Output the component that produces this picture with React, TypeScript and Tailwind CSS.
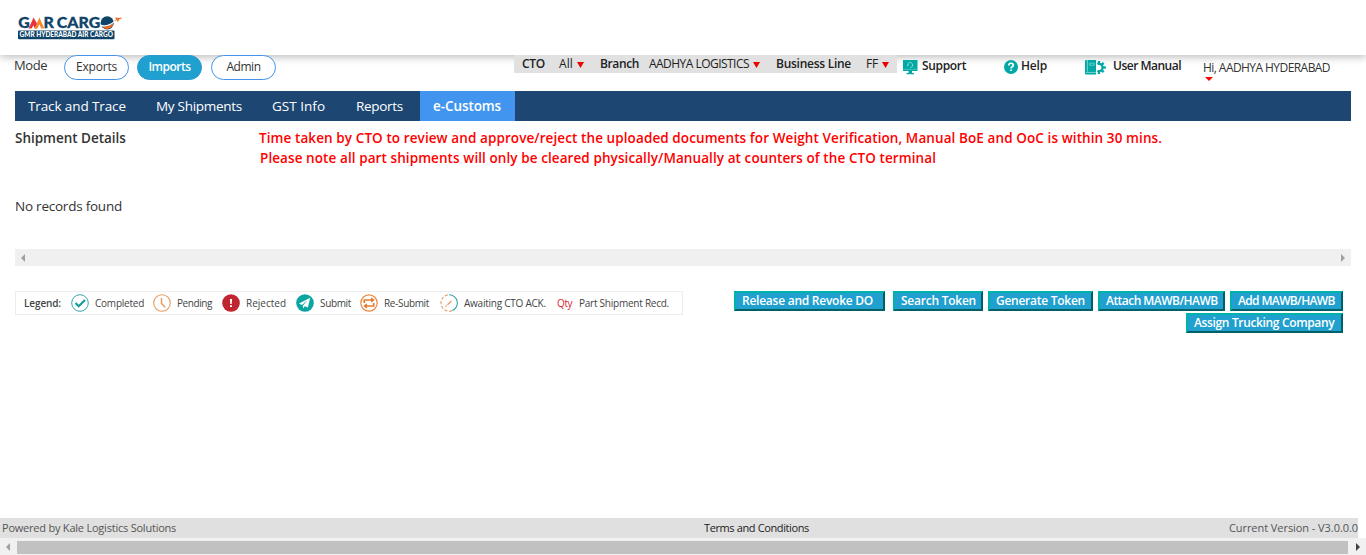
import type { ReactNode } from "react";

function Logo() {
  return (
    <svg width="106" height="26" viewBox="0 0 106 26" className="overflow-visible font-['Lato',sans-serif]">
      <g fill="#0f4468" stroke="#0f4468" strokeWidth="0.3" fontSize="15.6" fontWeight="900">
        <text x="0.3" y="13.2" textLength="11.5" lengthAdjust="spacingAndGlyphs">G</text>
        <text x="25.6" y="13.2" textLength="10.4" lengthAdjust="spacingAndGlyphs">R</text>
        <text x="38.8" y="13.2" textLength="43.5" lengthAdjust="spacingAndGlyphs">CARG</text>
      </g>
      <path d="M10.6 13.4 15.6 2.6l4.6 8.2-1.5 2.6h-2l-1.2-3.2-1.9 3.2z" fill="#e8333c" />
      <path d="M16.6 13.4 21.4 2.6l4.9 10.8h-3.1l-1.8-4.2-2.1 4.2z" fill="#f58a2c" />
      <circle cx="89.2" cy="7.8" r="6.6" fill="#0f4468" />
      <path d="M82.6 9.6c4.5 1.4 8.7.2 13-3.2l.4 1.2c-3.4 3.6-8 5-12.6 3.6z" fill="#fff" />
      <path d="M84 11.6c4.6.5 8-.7 11.4-3.4-.6 5.3-7.6 8-11.4 3.4z" fill="#ed6b27" />
      <path d="m95.6 6.2 3-2.2-2-1 1.4-.4 2.8.5 3-.5-.3.8-2.3 1-1.2 2.3-.9.1.1-1.9z" fill="#ed6b27" />
      <rect x="0" y="15.4" width="96.5" height="8.9" rx="1" fill="#0f4468" />
      <text x="1.6" y="22.3" fontSize="6.6" fontWeight="900" fill="#fff" textLength="93.3" lengthAdjust="spacingAndGlyphs">GMR HYDERABAD AIR CARGO</text>
    </svg>
  );
}

function Caret({ className = "" }: { className?: string }) {
  return <svg width="8" height="6" viewBox="0 0 8 6" className={className}><path d="M0 0h7L3.5 6z" fill="#f00000" /></svg>;
}

function SupportIcon() {
  return (
    <svg width="15" height="15" viewBox="0 0 15 15">
      <path d="M0 0h14.5v11H0zM5.5 11h3.5v2H11v1.2H3.5V13h2z" fill="#00a9a5" />
      <path d="M5 5.4V4.6a2.2 2.2 0 0 1 4.4 0v.8c0 1.6-.9 2.2-2.2 2.2" fill="none" stroke="#8edad7" strokeWidth=".8" />
      <path d="M4.3 4.3h1v1.9h-1zM9.1 4.3h1v1.9h-1z" fill="#8edad7" />
      <path d="M0 9.4h14.5" stroke="#6bcfcb" strokeWidth=".6" />
    </svg>
  );
}

function HelpIcon() {
  return (
    <svg width="14" height="14" viewBox="0 0 14 14">
      <circle cx="7" cy="7" r="7" fill="#00a9a5" />
      <path d="M4.8 5.4c0-2.8 4.5-2.8 4.5-.2 0 1.6-2.2 1.5-2.2 3.2" fill="none" stroke="#fff" strokeWidth="1.7" />
      <path d="M6.2 9.4h1.8v1.7H6.2z" fill="#fff" />
    </svg>
  );
}

function ManualIcon() {
  return (
    <svg width="21" height="15" viewBox="0 0 21 15">
      <path d="M1.2 0H11v14.5H1.2A1.2 1.2 0 0 1 0 13.3V1.2A1.2 1.2 0 0 1 1.2 0z" fill="#00a9a5" />
      <path d="M2.4 0v11.5M1 12.4h10" stroke="#c5efed" strokeWidth=".6" />
      <path d="M4.5 3.2H9.2v2H4.5z" fill="none" stroke="#8edad7" strokeWidth=".7" />
      <path d="M12.4 4.1a3.7 3.7 0 1 1 0 6.8" fill="none" stroke="#00a9a5" strokeWidth="2.2" />
      <path d="M14 1v3M18.6 2.8l-2 2M20.8 7.5h-3M18.6 12.2l-2-2M14 14v-3" stroke="#00a9a5" strokeWidth="2.4" />
    </svg>
  );
}

function CompletedIcon() {
  return (
    <svg width="18" height="18" viewBox="0 0 18 18" fill="none">
      <circle cx="9" cy="9" r="8.3" stroke="#35a7a5" />
      <path d="m4.5 9 3.2 3.2L14 6" stroke="#139d9b" strokeWidth="2.2" />
    </svg>
  );
}

function PendingIcon() {
  return (
    <svg width="18" height="18" viewBox="0 0 18 18" fill="none">
      <circle cx="9" cy="9" r="8.3" stroke="#e79a5c" strokeWidth="1.1" />
      <path d="M8.5 4v5.5l3.6 3.7" stroke="#e79a5c" strokeWidth="1.5" />
    </svg>
  );
}

function RejectedIcon() {
  return (
    <svg width="18" height="18" viewBox="0 0 18 18">
      <circle cx="9" cy="9" r="8.8" fill="#bf2630" />
      <path d="M7.9 5h2.2l-.4 5.1H8.3zM8 11.2h2v1.8H8z" fill="#fff" />
    </svg>
  );
}

function SubmitIcon() {
  return (
    <svg width="18" height="18" viewBox="0 0 18 18">
      <circle cx="9" cy="9" r="8.8" fill="#0ba5a1" />
      <path d="M14.2 3.8 3 9.6l2.9 1.3 5.7-4.6-4.6 5.2v2.9l1.8-2.1 3.1 1.2z" fill="#fff" />
    </svg>
  );
}

function ResubmitIcon() {
  return (
    <svg width="18" height="18" viewBox="0 0 18 18" fill="none">
      <circle cx="9" cy="9" r="8.2" stroke="#ea8840" strokeWidth="1.2" />
      <path d="M4.3 9V6h7.5M13.7 9v3H6.2" stroke="#e8792c" strokeWidth="1.7" />
      <path d="M11 3.2 14.8 6 11 8.8zM7 9.2 3.2 12 7 14.8z" fill="#e8792c" />
    </svg>
  );
}

function AwaitingIcon() {
  return (
    <svg width="18" height="18" viewBox="0 0 18 18" fill="none">
      <path d="M9 .8a8.2 8.2 0 0 1 3.2 15.8" stroke="#35a7a5" strokeWidth="1.1" />
      <path d="M12 16.7A8.2 8.2 0 1 1 9 .8" stroke="#e79a5c" strokeWidth="1.1" strokeDasharray="3 1.8" />
      <path d="m5.6 12.6 1.1-1.1M7.4 10.8 11.5 7" stroke="#e79a5c" strokeWidth="1.2" />
    </svg>
  );
}

function Legend({ icon, gap, label }: { icon: ReactNode; gap: string; label: ReactNode }) {
  return <div className={`flex shrink-0 items-center ${gap}`}>{icon}{label}</div>;
}

function Action({ width, children }: { width: string; children: ReactNode }) {
  return (
    <button className={`flex h-5 shrink-0 items-start border-2 border-t-[#00b3aa] border-l-[#00b3aa] border-r-[#006065] border-b-[#006065] bg-[#1fa0cf] pl-1.5 text-left text-[12px] leading-[15px] font-semibold text-white ${width}`}>
      {children}
    </button>
  );
}

export default function App() {
  return (
    <div className="flex h-[555px] w-[1366px] flex-col overflow-hidden bg-white font-['Open_Sans','Noto_Sans',sans-serif] whitespace-nowrap text-[#333]">
      <header className="relative z-10 h-[55px] shrink-0 bg-white pt-[15px] pl-[18px] shadow-[0_2px_8px_rgba(0,0,0,0.27)]">
        <Logo />
      </header>

      <div className="relative z-20 flex h-9 shrink-0 items-start text-[12px] leading-4">
        <div className="w-[50px] pt-0.5 pl-3.5 text-[13px] leading-[17px] tracking-[-0.4px]">Mode</div>
        <div className="ml-3.5 flex h-[25px] gap-2 text-center leading-[22px]">
          <div className="w-[65px] rounded-full border border-[#4394ec] bg-white tracking-[-0.2px]">Exports</div>
          <div className="w-[65px] rounded-full border border-[#2999d5] bg-[#1fa0cf] font-semibold tracking-[-0.52px] text-white">Imports</div>
          <div className="ml-px w-[65px] rounded-full border border-[#4394ec] bg-white tracking-[-0.45px]">Admin</div>
        </div>
        <div className="ml-[238px] flex h-[18px] w-[383px] items-center bg-[#e1e1e1] pl-2 text-[#222]">
          <b className="w-[37px] font-semibold tracking-[-0.28px]">CTO</b>
          <span className="w-[18px] tracking-[0.12px]">All</span>
          <Caret className="mt-0.5" />
          <b className="ml-[15px] w-[49px] font-semibold tracking-[-0.38px]">Branch</b>
          <span className="w-[104px] tracking-[-0.53px]">AADHYA LOGISTICS</span>
          <Caret className="mt-0.5" />
          <b className="ml-[15px] w-[90px] font-semibold tracking-[-0.27px]">Business Line</b>
          <span className="w-4 tracking-[-0.2px]">FF</span>
          <Caret className="mt-0.5" />
        </div>
        <div className="ml-1.5 flex pt-[3px] font-semibold text-[#222]">
          <div className="flex w-[101px] gap-1"><div className="pt-0.5"><SupportIcon /></div><span className="tracking-[-0.34px]">Support</span></div>
          <div className="flex w-[81px] gap-[3px]"><div className="pt-0.5"><HelpIcon /></div><span className="tracking-[-0.2px]">Help</span></div>
          <div className="flex w-[118px] gap-[7px]"><div className="pt-0.5"><ManualIcon /></div><span className="tracking-[-0.5px]">User Manual</span></div>
        </div>
        <div className="pt-[5px] tracking-[-0.56px]">
          Hi, AADHYA HYDERABAD
          <svg width="8" height="4" viewBox="0 0 8 4" className="mt-px ml-0.5 block"><path d="M0 0h8L4 4z" fill="red" /></svg>
        </div>
      </div>

      <nav className="mx-[15px] flex h-[30px] shrink-0 bg-[#1d4673] text-[13.5px] leading-[30px] text-white">
        <span className="w-[141px] pl-[13px] tracking-[-0.11px]">Track and Trace</span>
        <span className="w-[116px] tracking-[-0.28px]">My Shipments</span>
        <span className="w-[84px] tracking-[0.02px]">GST Info</span>
        <span className="w-16 tracking-[-0.3px]">Reports</span>
        <span className="w-[95px] bg-[#4295ef] pl-[13px] font-semibold tracking-[-0.09px]">e-Customs</span>
      </nav>

      <main className="flex h-[397px] shrink-0 flex-col px-[15px]">
        <div className="flex h-[75px] pt-[7px] text-[13.5px] leading-5 font-semibold">
          <h1 className="w-[244px] tracking-[-0.02px]">Shipment Details</h1>
          <div className="text-[#f00]">
            <p className="tracking-[0.092px]">Time taken by CTO to review and approve/reject the uploaded documents for Weight Verification, Manual BoE and OoC is within 30 mins.</p>
            <p className="pl-px tracking-[0.083px]">Please note all part shipments will only be cleared physically/Manually at counters of the CTO terminal</p>
          </div>
        </div>
        <p className="h-[53px] text-[13.5px] leading-5 tracking-[-0.23px]">No records found</p>
        <div className="flex h-[17px] shrink-0 items-center justify-between bg-[#f0f0f0] px-1.5">
          <svg width="4" height="8" viewBox="0 0 4 8"><path d="M4 0v8L0 4z" fill="#a0a0a0" /></svg>
          <svg width="4" height="8" viewBox="0 0 4 8"><path d="M0 0v8l4-4z" fill="#a0a0a0" /></svg>
        </div>
        <div className="mt-[25px] flex justify-between pr-2">
          <div className="flex h-6 w-[668px] items-center border border-[#ededed] pl-2 text-[10px] leading-4 text-[#444]">
            <b className="w-[47px] font-semibold tracking-[-0.12px]">Legend:</b>
            <Legend icon={<CompletedIcon />} gap="gap-1.5 w-[82px]" label={<span className="tracking-[-0.23px]">Completed</span>} />
            <Legend icon={<PendingIcon />} gap="gap-1.5 w-[69px]" label={<span className="tracking-[-0.43px]">Pending</span>} />
            <Legend icon={<RejectedIcon />} gap="gap-1.5 w-[74px]" label={<span>Rejected</span>} />
            <Legend icon={<SubmitIcon />} gap="gap-1.5 w-16" label={<span className="tracking-[-0.35px]">Submit</span>} />
            <Legend icon={<ResubmitIcon />} gap="gap-1.5 w-20" label={<span className="tracking-[-0.34px]">Re-Submit</span>} />
            <Legend icon={<AwaitingIcon />} gap="gap-1.5 w-[117px]" label={<span className="tracking-[-0.24px]">Awaiting CTO ACK.</span>} />
            <span className="w-[22px] tracking-[-0.4px] text-[#d9232d]">Qty</span>
            <span className="tracking-[-0.24px]">Part Shipment Recd.</span>
          </div>
          <div className="flex flex-col items-end gap-0.5">
            <div className="flex gap-[5px]">
              <Action width="w-[151px] mr-[3px]"><span className="tracking-[-0.25px]">Release and Revoke DO</span></Action>
              <Action width="w-[90px]"><span className="tracking-[-0.24px]">Search Token</span></Action>
              <Action width="w-[105px]"><span className="tracking-[-0.26px]">Generate Token</span></Action>
              <Action width="w-[127px]"><span className="tracking-[-0.54px]">Attach MAWB/HAWB</span></Action>
              <Action width="w-[113px]"><span className="tracking-[-0.64px]">Add MAWB/HAWB</span></Action>
            </div>
            <Action width="w-[157px]"><span className="tracking-[-0.35px]">Assign Trucking Company</span></Action>
          </div>
        </div>
      </main>

      <footer className="mr-[8px] flex h-5 shrink-0 bg-[#e0e0e0] pl-0.5 text-[11px] leading-5 text-[#555]">
        <span className="w-[702px] tracking-[-0.22px]">Powered by Kale Logistics Solutions</span>
        <span className="w-[525px] tracking-[-0.38px] text-[#222]">Terms and Conditions</span>
        <span className="tracking-[-0.06px]">Current Version - V3.0.0.0</span>
      </footer>
      <div className="flex h-[17px] shrink-0 items-center bg-[#f1f1f1]">
        <svg width="17" height="8" viewBox="0 0 17 8"><path d="M10 0v8L6 4z" fill="#a0a0a0" /></svg>
        <div className="mt-0.5 h-[13px] w-[1331px] bg-[#c1c1c1]" />
        <svg width="18" height="8" viewBox="0 0 18 8"><path d="M8 0v8l4-4z" fill="#404040" /></svg>
      </div>
    </div>
  );
}
